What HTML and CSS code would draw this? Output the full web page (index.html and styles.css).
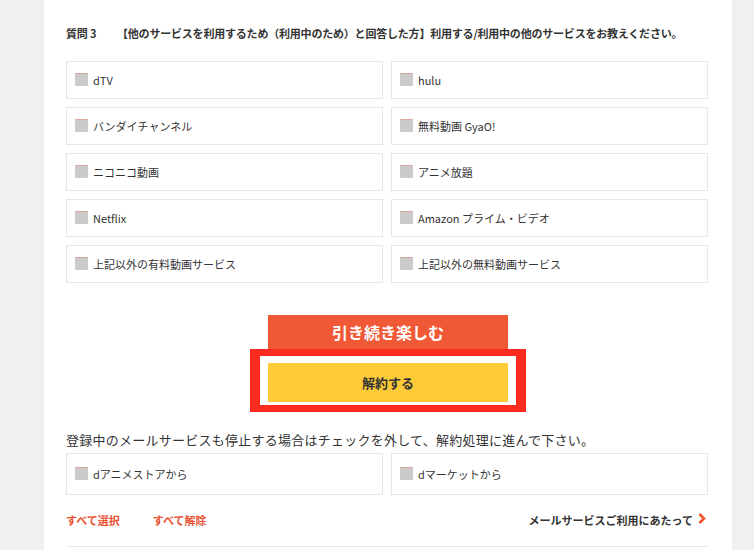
FILE: index.html
```html
<!DOCTYPE html>
<html lang="ja">
<head>
<meta charset="utf-8">
<link rel="stylesheet" href="styles.css">
</head>
<body>
<div class="panel">
  <h2 class="q-title"><span class="q-num">質問 3</span>【他のサービスを利用するため（利用中のため）と回答した方】利用する/利用中の他のサービスをお教えください。</h2>
  <div class="opts">
    <label class="opt"><span class="cb"></span>dTV</label>
    <label class="opt"><span class="cb"></span>hulu</label>
    <label class="opt"><span class="cb"></span>バンダイチャンネル</label>
    <label class="opt"><span class="cb"></span>無料動画 GyaO!</label>
    <label class="opt"><span class="cb"></span>ニコニコ動画</label>
    <label class="opt"><span class="cb"></span>アニメ放題</label>
    <label class="opt"><span class="cb"></span>Netflix</label>
    <label class="opt"><span class="cb"></span>Amazon プライム・ビデオ</label>
    <label class="opt"><span class="cb"></span>上記以外の有料動画サービス</label>
    <label class="opt"><span class="cb"></span>上記以外の無料動画サービス</label>
  </div>
  <div class="actions">
    <button class="btn-continue">引き続き楽しむ</button>
    <div class="highlight">
      <button class="btn-cancel">解約する</button>
    </div>
  </div>
  <p class="note">登録中のメールサービスも停止する場合はチェックを外して、解約処理に進んで下さい。</p>
  <div class="opts mail">
    <label class="opt"><span class="cb"></span>dアニメストアから</label>
    <label class="opt"><span class="cb"></span>dマーケットから</label>
  </div>
  <div class="links">
    <a class="link-red">すべて選択</a>
    <a class="link-red">すべて解除</a>
    <a class="link-more">メールサービスご利用にあたって<svg class="chev" width="8" height="11" viewBox="0 0 8 11"><polyline points="1.5,1 6,5.5 1.5,10" fill="none" stroke="#f0542d" stroke-width="2.6"/></svg></a>
  </div>
  <div class="rule"></div>
</div>
</body>
</html>
```
FILE: styles.css
```css
html, body {
  margin: 0;
  padding: 0;
  background: #f0f0f0;
  font-family: "Noto Sans CJK JP", "Liberation Sans", sans-serif;
  color: #333;
}
.panel {
  margin-left: 44px;
  width: 642px;
  min-height: 550px;
  background: #fff;
  padding: 25px 24px 0 22px;
  box-sizing: content-box;
}
.q-title {
  margin: 0;
  font-size: 11px;
  line-height: 16px;
  font-weight: 700;
  color: #333;
  white-space: nowrap;
  letter-spacing: -0.2px;
}
.q-num {
  display: inline-block;
  width: 47px;
  margin-right: 4px;
}
.opts {
  margin-top: 20px;
  display: grid;
  grid-template-columns: 317px 317px;
  column-gap: 8px;
  row-gap: 8px;
}
.opt {
  height: 38px;
  box-sizing: border-box;
  border: 1px solid #e6e6e6;
  display: flex;
  align-items: center;
  padding-left: 8px;
  font-size: 11px;
  color: #333;
}
.cb {
  width: 13px;
  height: 13px;
  box-sizing: border-box;
  background: #cbcbcb;
  border-top: 1px solid #d9a79d;
  border-radius: 1px;
  margin-right: 5px;
  margin-top: -2px;
  flex: none;
}
.actions {
  margin-top: 32px;
  display: flex;
  flex-direction: column;
  align-items: center;
}
.btn-continue {
  width: 240px;
  height: 34px;
  border: 0;
  margin: 0 0 0 2px;
  background: #f15835;
  color: #fff;
  font-family: inherit;
  font-size: 16px;
  font-weight: 700;
  padding: 0;
}
.highlight {
  margin-left: 2px;
  border-style: solid;
  border-color: #fc2b1f;
  border-width: 7px 10px 7px 10px;
  padding: 7px 8px 3px 8px;
  background: #fff;
}
.btn-cancel {
  display: block;
  width: 240px;
  height: 39px;
  border: 0;
  padding: 0;
  background: #fecb38;
  color: #333;
  font-family: inherit;
  font-size: 13px;
  font-weight: 700;
}
.note {
  margin: 20px 0 0;
  font-size: 13px;
  line-height: 16px;
  letter-spacing: 0.25px;
  color: #333;
}
.opts.mail {
  margin-top: 5px;
}
.opts.mail .opt {
  height: 42px;
}
.links {
  margin-top: 17px;
  display: flex;
  align-items: center;
  font-size: 11px;
  line-height: 16px;
  font-weight: 700;
}
.link-red {
  color: #e8502f;
  margin-right: 33px;
}
.link-more {
  margin-left: auto;
  margin-right: 2px;
  color: #333;
  display: flex;
  align-items: center;
}
.chev {
  margin-left: 5px;
  margin-top: -4px;
}
.rule {
  margin-top: 18px;
  height: 1px;
  background: #e8e8e8;
}
```
